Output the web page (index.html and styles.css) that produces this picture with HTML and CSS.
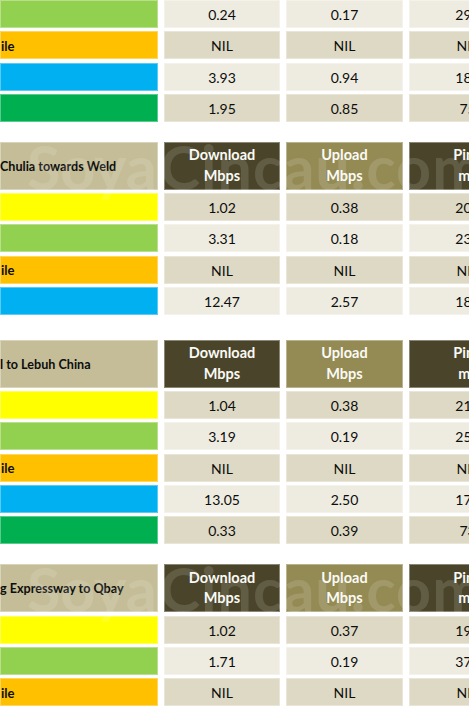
FILE: index.html
```html
<!DOCTYPE html>
<html lang="en">
    <head>
        <meta name="viewport" content="width=device-width, initial-scale=1">
        <link rel="stylesheet" href="styles.css">
        <title>Speed test results</title>
    </head>
    <body>
        <div class="sheet">
            <!-- first block, top rows cut off by the crop -->
            <div class="block">
                <div class="row light">
                    <div class="op maxis"></div>
                    <div class="val">0.24</div><div class="val">0.17</div><div class="val">293</div>
                </div>
                <div class="row dark">
                    <div class="op umobile">ile</div>
                    <div class="val">NIL</div><div class="val">NIL</div><div class="val">NIL</div>
                </div>
                <div class="row light">
                    <div class="op celcom"></div>
                    <div class="val">3.93</div><div class="val">0.94</div><div class="val">183</div>
                </div>
                <div class="row dark">
                    <div class="op yes"></div>
                    <div class="val">1.95</div><div class="val">0.85</div><div class="val">75</div>
                </div>
            </div>

            <div class="block">
                <div class="watermark">Soya<span class="wm-tail">Cincau.com</span></div>
                <div class="row head">
                    <div class="route">Chulia towards Weld</div>
                    <div class="col-dl">Download<br>Mbps</div>
                    <div class="col-ul">Upload<br>Mbps</div>
                    <div class="col-ping">Ping<br>ms</div>
                </div>
                <div class="row dark">
                    <div class="op digi"></div>
                    <div class="val">1.02</div><div class="val">0.38</div><div class="val">203</div>
                </div>
                <div class="row light">
                    <div class="op maxis"></div>
                    <div class="val">3.31</div><div class="val">0.18</div><div class="val">232</div>
                </div>
                <div class="row dark">
                    <div class="op umobile">ile</div>
                    <div class="val">NIL</div><div class="val">NIL</div><div class="val">NIL</div>
                </div>
                <div class="row light">
                    <div class="op celcom"></div>
                    <div class="val">12.47</div><div class="val">2.57</div><div class="val">187</div>
                </div>
            </div>

            <div class="block block-far">
                <div class="row head">
                    <div class="route">l to Lebuh China</div>
                    <div class="col-dl">Download<br>Mbps</div>
                    <div class="col-ul">Upload<br>Mbps</div>
                    <div class="col-ping">Ping<br>ms</div>
                </div>
                <div class="row dark">
                    <div class="op digi"></div>
                    <div class="val">1.04</div><div class="val">0.38</div><div class="val">214</div>
                </div>
                <div class="row light">
                    <div class="op maxis"></div>
                    <div class="val">3.19</div><div class="val">0.19</div><div class="val">256</div>
                </div>
                <div class="row dark">
                    <div class="op umobile">ile</div>
                    <div class="val">NIL</div><div class="val">NIL</div><div class="val">NIL</div>
                </div>
                <div class="row light">
                    <div class="op celcom"></div>
                    <div class="val">13.05</div><div class="val">2.50</div><div class="val">172</div>
                </div>
                <div class="row dark">
                    <div class="op yes"></div>
                    <div class="val">0.33</div><div class="val">0.39</div><div class="val">73</div>
                </div>
            </div>

            <div class="block">
                <div class="watermark">Soya<span class="wm-tail">Cincau.com</span></div>
                <div class="row head">
                    <div class="route">g Expressway to Qbay</div>
                    <div class="col-dl">Download<br>Mbps</div>
                    <div class="col-ul">Upload<br>Mbps</div>
                    <div class="col-ping">Ping<br>ms</div>
                </div>
                <div class="row dark">
                    <div class="op digi"></div>
                    <div class="val">1.02</div><div class="val">0.37</div><div class="val">196</div>
                </div>
                <div class="row light">
                    <div class="op maxis"></div>
                    <div class="val">1.71</div><div class="val">0.19</div><div class="val">371</div>
                </div>
                <div class="row dark">
                    <div class="op umobile">ile</div>
                    <div class="val">NIL</div><div class="val">NIL</div><div class="val">NIL</div>
                </div>
            </div>
        </div>
    </body>
</html>
```

FILE: styles.css
```css
html,
body {
    overflow: hidden;
}

body {
    background: #fff;
    color: #0d0d0d;
    font-family: Lato, "Open Sans", sans-serif;
    font-size: 14px;
    margin: 0;
}

.sheet {
    width: 526px;
}

.block {
    display: flex;
    flex-direction: column;
    gap: 3.3px;
    position: relative;
    overflow: hidden;
}

.block + .block {
    margin-top: 20px;
}

.block.block-far {
    margin-top: 24.8px;
}

.row {
    display: grid;
    grid-template-columns: 158px 116px 117px 117px;
    column-gap: 6px;
    height: 28px;
}

.row > div {
    box-shadow: inset 0 0 0 1px rgba(255, 255, 255, 0.35);
    display: flex;
    align-items: center;
}

.row.head {
    height: 48px;
}

.op {
    font-size: 13px;
    font-weight: 700;
    padding: 1px 0 0 1px;
}

.maxis   { background: #92d050; }
.umobile { background: #ffc000; }
.celcom  { background: #00b0f0; }
.yes     { background: #00b050; }
.digi    { background: #ffff00; }

.val {
    justify-content: center;
    padding-top: 1px;
}

.row.dark .val {
    background: #ddd9c4;
}

.row.light .val {
    background: #eeece1;
}

.route {
    background: #c4bd97;
    font-size: 12.6px;
    font-weight: 700;
    padding-top: 1px;
}

.col-dl,
.col-ul,
.col-ping {
    color: #fafaf5;
    font-size: 14.5px;
    font-weight: 700;
    justify-content: center;
    line-height: 20.5px;
    text-align: center;
}

.col-dl,
.col-ping {
    background: #4a452a;
}

.col-ul {
    background: #948a54;
}

.watermark {
    color: rgba(255, 255, 255, 0.13);
    font-size: 61px;
    font-weight: 700;
    left: 27px;
    line-height: 1;
    pointer-events: none;
    position: absolute;
    top: -6px;
    white-space: nowrap;
    z-index: 1;
}

.wm-tail {
    letter-spacing: 1px;
    margin-left: 3px;
}
```
